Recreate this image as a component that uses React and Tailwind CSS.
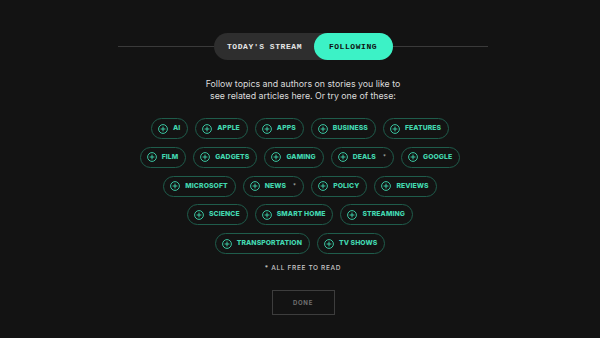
import React from "react";

const rows = [
  ["AI", "APPLE", "APPS", "BUSINESS", "FEATURES"],
  ["FILM", "GADGETS", "GAMING", "DEALS*", "GOOGLE"],
  ["MICROSOFT", "NEWS*", "POLICY", "REVIEWS"],
  ["SCIENCE", "SMART HOME", "STREAMING"],
  ["TRANSPORTATION", "TV SHOWS"],
];

function PlusCircle() {
  return (
    <svg width="10" height="10" viewBox="0 0 10 10" fill="none" className="shrink-0">
      <circle cx="5" cy="5" r="4.4" stroke="#3fd9b0" strokeWidth="0.9" />
      <path d="M5 2.6V7.4M2.6 5H7.4" stroke="#3fd9b0" strokeWidth="0.9" />
    </svg>
  );
}

function Chip({ label }) {
  const star = label.endsWith("*");
  const text = star ? label.slice(0, -1) : label;
  return (
    <div className="flex h-[21px] items-center gap-[5px] rounded-full border border-[#1f5c4b] pl-[6px] pr-[7px]">
      <PlusCircle />
      <span className="text-[6.8px] font-extrabold leading-none tracking-[0.015em] text-[#42d8b0]">{text}</span>
      {star && <span className="ml-[2px] text-[6px] leading-none text-[#bbbbbb]">*</span>}
    </div>
  );
}

export default function App() {
  return (
    <div
      className="flex h-[338px] w-full flex-col items-center bg-[#131313]"
      style={{ fontFamily: "Inter, 'Liberation Sans', sans-serif" }}
    >
      <div className="ml-[6px] mt-[33px] flex w-[370px] items-center">
        <div className="h-px flex-1 bg-[#3a3a3a]" />
        <div className="flex h-[27px] w-[179px] items-center rounded-full bg-[#2e2e2e]">
          <div
            className="flex h-full w-[100px] items-center justify-center pl-[2px] text-[8px] font-bold tracking-[0.07em] text-[#e6e6e6]"
            style={{ fontFamily: "'Liberation Mono', monospace" }}
          >
            TODAY'S STREAM
          </div>
          <div
            className="flex h-full flex-1 items-center justify-center rounded-full bg-[#3cf2c6] text-[8px] font-bold tracking-[0.07em] text-[#111111]"
            style={{ fontFamily: "'Liberation Mono', monospace" }}
          >
            FOLLOWING
          </div>
        </div>
        <div className="h-px flex-1 bg-[#3a3a3a]" />
      </div>

      <p className="ml-[6px] mt-[18px] text-center text-[8.8px] leading-[12px] text-[#dcdcdc]">
        Follow topics and authors on stories you like to
        <br />
        see related articles here. Or try one of these:
      </p>

      <div className="mt-[16px] flex flex-col items-center gap-[7.75px]">
        {rows.map((row, i) => (
          <div key={i} className="flex items-center gap-[7px]">
            {row.map((l) => (
              <Chip key={l} label={l} />
            ))}
          </div>
        ))}
      </div>

      <div className="ml-[6px] mt-[11px] text-[6.5px] font-medium leading-none tracking-[0.1em] text-[#c8c8c8]">
        * ALL FREE TO READ
      </div>

      <div className="ml-[6px] mt-[18px] flex h-[25px] w-[63px] items-center justify-center border border-[#3d3d3d] text-[6px] font-bold tracking-[0.12em] text-[#707070]">
        DONE
      </div>
    </div>
  );
}
